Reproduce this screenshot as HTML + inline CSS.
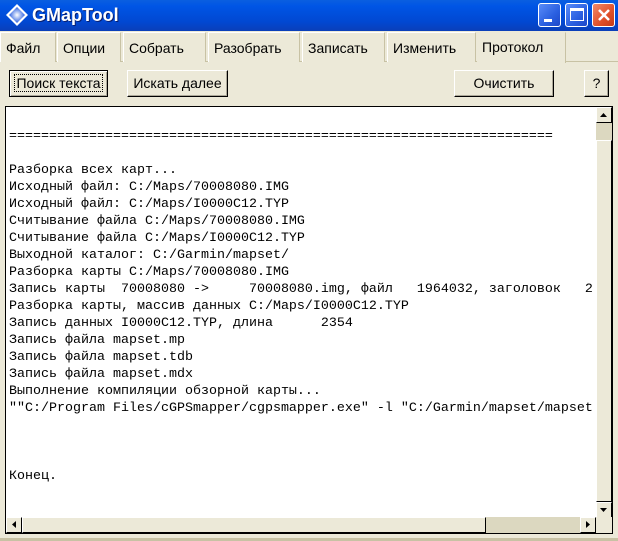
<!DOCTYPE html>
<html><head><meta charset="utf-8"><style>
*{margin:0;padding:0;box-sizing:border-box}
body{width:618px;height:541px;background:#ece9d8;position:relative;overflow:hidden;font-family:"Liberation Sans",sans-serif;font-size:13px}
.title{position:absolute;left:0;top:0;width:618px;height:31px;background:linear-gradient(#0a5fe0,#0055e5 20%,#0148d2 70%,#0a3fb8);}
.title .t{position:absolute;left:32px;top:5px;color:#fff;font-weight:bold;font-size:18px;text-shadow:1px 1px #0a1f6e}
.dia{position:absolute;left:6px;top:4px;width:22px;height:22px}
.wb{position:absolute;top:3px;width:23px;height:24px;border:1px solid #fff;border-radius:3px;background:linear-gradient(135deg,#5a8cf8,#2a5fe0 60%,#1d47c8)}
.tab{position:absolute;top:32px;height:30px;border:1px solid #fff;border-right-color:#c8c2a4;border-bottom:none;padding:7px 0 0 5px;font-size:14px;color:#000;background:#ece9d8}
.btn{position:absolute;top:70px;height:27px;border:1px solid;border-color:#fff #000 #000 #fff;box-shadow:inset -1px -1px #aca899;background:#ece9d8;font-size:14px;text-align:center;line-height:25px}
.box{position:absolute;left:5px;top:106px;width:608px;height:428px;border:1px solid #000;background:#fff}
pre{position:absolute;left:3px;top:21px;font-family:"Liberation Mono",monospace;font-size:13.33px;line-height:17px;white-space:pre;overflow:hidden;width:586px}
.sb{position:absolute;background:#ece9d8}
.ar{position:absolute;background:#ece9d8;border:1px solid;border-color:#fff #000 #000 #fff}
</style></head><body>
<div class="title">
<svg class="dia" viewBox="0 0 22 22"><defs><radialGradient id="g"><stop offset="0" stop-color="#fff"/><stop offset="1" stop-color="#2a5fe0"/></radialGradient></defs><polygon points="11,0 22,11 11,22 0,11" fill="#fff"/><polygon points="11,3 19,11 11,19 3,11" fill="url(#g)"/></svg>
<div class="t">GMapTool</div>
<div class="wb" style="left:538px"><div style="position:absolute;left:5px;top:15px;width:8px;height:3px;background:#fff"></div></div>
<div class="wb" style="left:565px"><div style="position:absolute;left:4px;top:4px;width:14px;height:13px;border:1px solid #fff;border-top-width:3px"></div></div>
<div class="wb" style="left:592px;background:linear-gradient(135deg,#f08a6a,#e0502a 60%,#c43a18)"><svg style="position:absolute;left:4px;top:4px" width="14" height="14"><path d="M2 2L12 12M12 2L2 12" stroke="#fff" stroke-width="2.5"/></svg></div>
</div>
<div style="position:absolute;left:0;top:61px;width:618px;height:1px;background:#c8c2a4"></div>
<div class="tab" style="left:0;width:56px">Файл</div>
<div class="tab" style="left:57px;width:64px">Опции</div>
<div class="tab" style="left:123px;width:83px">Собрать</div>
<div class="tab" style="left:208px;width:92px">Разобрать</div>
<div class="tab" style="left:302px;width:83px">Записать</div>
<div class="tab" style="left:387px;width:89px">Изменить</div>
<div class="tab" style="left:477px;width:89px;height:31px;border-color:#ece9d8;border-right-color:#c8c2a4;padding-left:4px;padding-top:6px">Протокол</div>
<div class="btn" style="left:9px;width:99px;border-color:#000;box-shadow:inset 1px 1px #fff,inset -1px -1px #aca899"><span style="outline:1px dotted #000;padding:0 1px">Поиск текста</span></div>
<div class="btn" style="left:127px;width:101px">Искать далее</div>
<div class="btn" style="left:454px;width:100px">Очистить</div>
<div class="btn" style="left:584px;width:25px">?</div>
<div class="box">
<pre>====================================================================

Разборка всех карт...
Исходный файл: C:/Maps/70008080.IMG
Исходный файл: C:/Maps/I0000C12.TYP
Считывание файла C:/Maps/70008080.IMG
Считывание файла C:/Maps/I0000C12.TYP
Выходной каталог: C:/Garmin/mapset/
Разборка карты C:/Maps/70008080.IMG
Запись карты  70008080 ->     70008080.img, файл   1964032, заголовок   2
Разборка карты, массив данных C:/Maps/I0000C12.TYP
Запись данных I0000C12.TYP, длина      2354
Запись файла mapset.mp
Запись файла mapset.tdb
Запись файла mapset.mdx
Выполнение компиляции обзорной карты...
""C:/Program Files/cGPSmapper/cgpsmapper.exe" -l "C:/Garmin/mapset/mapset



Конец.</pre>
<div class="sb" style="left:590px;top:0;width:16px;height:410px;background:#f4f2e8"></div>
<div class="ar" style="left:590px;top:0;width:16px;height:16px"><svg width="14" height="14" style="position:absolute;left:0;top:0"><path d="M3 9h7L6.5 5z" fill="#000"/></svg></div>
<div style="position:absolute;left:590px;top:16px;width:16px;height:17px;background:#dcd8c0"></div>
<div class="ar" style="left:590px;top:33px;width:16px;height:362px"></div>
<div class="ar" style="left:590px;top:395px;width:16px;height:16px"><svg width="14" height="14" style="position:absolute;left:0;top:0"><path d="M3 5h7L6.5 9z" fill="#000"/></svg></div>
<div class="sb" style="left:0;top:410px;width:590px;height:16px;background:#dcd8c0"></div>
<div class="ar" style="left:0;top:410px;width:16px;height:16px"><svg width="14" height="14" style="position:absolute;left:0;top:0"><path d="M9 3v7L5 6.5z" fill="#000"/></svg></div>
<div class="ar" style="left:16px;top:410px;width:464px;height:16px"></div>
<div class="ar" style="left:574px;top:410px;width:16px;height:16px"><svg width="14" height="14" style="position:absolute;left:0;top:0"><path d="M5 3v7L9 6.5z" fill="#000"/></svg></div>
<div class="sb" style="left:590px;top:410px;width:16px;height:16px"></div>
</div>
<div style="position:absolute;left:0;top:538px;width:618px;height:3px;background:#c8c2a4"></div>
</body></html>
